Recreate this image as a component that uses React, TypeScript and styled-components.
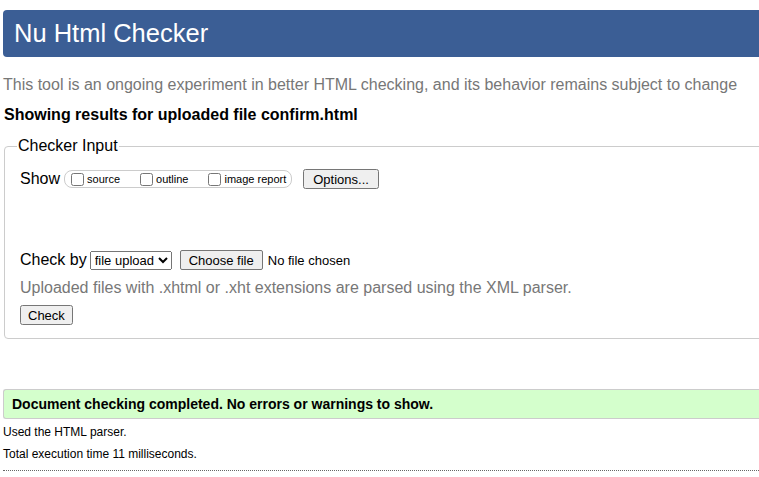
import styled, { createGlobalStyle } from 'styled-components'

const GlobalStyle = createGlobalStyle`
  html, body {
    margin: 0;
    padding: 0;
    overflow: hidden;
    background: #fff;
  }
  body {
    font-family: "Liberation Sans", Arial, sans-serif;
    color: #000;
  }
`

const Page = styled.div`
  width: 820px;
  padding: 10px 0 0 3px;
`

const Header = styled.h1`
  margin: 0;
  height: 47px;
  line-height: 47px;
  padding-left: 11px;
  background: #3b5e95;
  color: #fff;
  font-size: 25.5px;
  font-weight: normal;
  border-radius: 4px 0 0 4px;
`

const Intro = styled.p`
  margin: 19px 0 0;
  font-size: 16px;
  line-height: 18px;
  color: #777;
`

const ResultsFor = styled.p`
  margin: 12px 0 0 1px;
  font-size: 16px;
  line-height: 18px;
  font-weight: bold;
`

const Fieldset = styled.fieldset`
  margin: 13px 0 0 1px;
  padding: 0 0 13px 15px;
  border: 1px solid #ccc;
  border-radius: 4px;
  min-width: 0;
`

const Legend = styled.legend`
  padding: 0 1px;
  margin-left: -3px;
  font-size: 16px;
  line-height: 18px;
  color: #000;
`

const Row = styled.div<{ $top?: number }>`
  display: flex;
  align-items: center;
  margin-top: ${(p) => p.$top ?? 0}px;
`

const Label = styled.span`
  font-size: 16px;
`

const ShowGroup = styled.div`
  display: flex;
  align-items: center;
  gap: 20px;
  height: 16px;
  margin-left: 4px;
  padding: 0 5px 0 6px;
  border: 1px solid #ccc;
  border-radius: 8px;
`

const ShowItem = styled.label`
  display: flex;
  align-items: center;
  font-size: 11px;
  gap: 3px;
`

const Checkbox = styled.input.attrs({ type: 'checkbox' })`
  margin: 0;
  width: 13px;
  height: 13px;
`

const Button = styled.button<{ $left?: number }>`
  font-family: "Liberation Sans", Arial, sans-serif;
  font-size: 13px;
  height: 20px;
  padding: 0 ${(p) => (p.$left ? 8 : 6)}px;
  margin: 0 0 0 ${(p) => p.$left ?? 0}px;
`

const Select = styled.select`
  font-family: "Liberation Sans", Arial, sans-serif;
  font-size: 13px;
  height: 19px;
  margin: 0 0 0 3px;
`

const FilePicker = styled.label`
  display: flex;
  align-items: center;
  gap: 5px;
  margin-left: 8px;
  font-size: 13px;

  input {
    display: none;
  }
`

const FileButton = styled.span`
  display: inline-flex;
  align-items: center;
  height: 18px;
  padding: 0 8px;
  background: #efefef;
  border: 1px solid #767676;
  border-radius: 2px;
  font-size: 13px;
`

const Note = styled.p`
  margin: 9px 0 0;
  font-size: 16px;
  line-height: 18px;
  color: #777;
`

const Success = styled.div`
  margin-top: 50px;
  height: 28px;
  line-height: 28px;
  padding-left: 8px;
  background: #d4ffcc;
  border: 1px solid #ccc;
  border-right: none;
  border-radius: 3px 0 0 3px;
  font-size: 14px;
  font-weight: bold;
`

const Detail = styled.p<{ $top: number }>`
  margin: ${(p) => p.$top}px 0 0;
  font-size: 12px;
  line-height: 14px;
`

const Rule = styled.hr`
  margin: 9px 0 0;
  border: none;
  border-top: 1px dotted #666;
`

export default function App() {
  return (
    <Page>
      <GlobalStyle />
      <Header>Nu Html Checker</Header>
      <Intro>
        This tool is an ongoing experiment in better HTML checking, and its behavior remains
        subject to change
      </Intro>
      <ResultsFor>Showing results for uploaded file confirm.html</ResultsFor>
      <Fieldset>
        <Legend>Checker Input</Legend>
        <Row $top={14}>
          <Label>Show</Label>
          <ShowGroup>
            <ShowItem>
              <Checkbox />
              source
            </ShowItem>
            <ShowItem>
              <Checkbox />
              outline
            </ShowItem>
            <ShowItem>
              <Checkbox />
              image report
            </ShowItem>
          </ShowGroup>
          <Button $left={11}>Options...</Button>
        </Row>
        <Row $top={61}>
          <Label>Check by</Label>
          <Select defaultValue="file">
            <option value="file">file upload</option>
            <option value="address">address</option>
            <option value="textarea">text input</option>
          </Select>
          <FilePicker>
            <input type="file" />
            <FileButton>Choose file</FileButton>
            No file chosen
          </FilePicker>
        </Row>
        <Note>Uploaded files with .xhtml or .xht extensions are parsed using the XML parser.</Note>
        <Row $top={8}>
          <Button>Check</Button>
        </Row>
      </Fieldset>
      <Success>Document checking completed. No errors or warnings to show.</Success>
      <Detail $top={6}>Used the HTML parser.</Detail>
      <Detail $top={8}>Total execution time 11 milliseconds.</Detail>
      <Rule />
    </Page>
  )
}
